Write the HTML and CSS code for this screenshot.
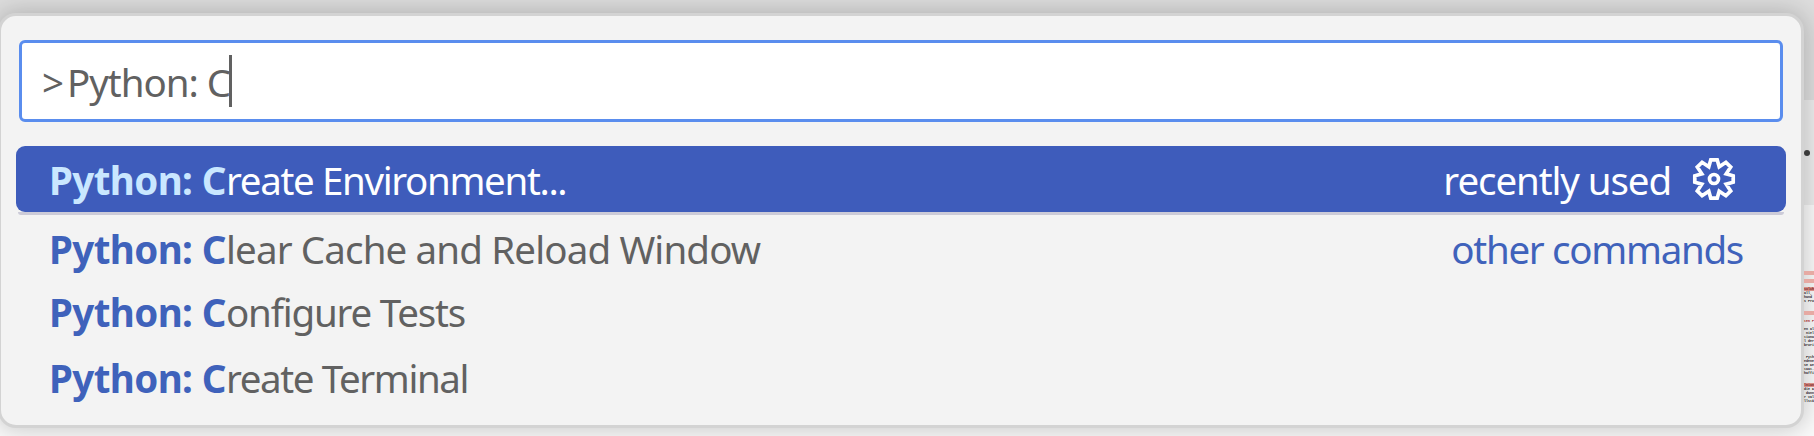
FILE: index.html
```
<!DOCTYPE html>
<html lang="en">
<head>
<meta charset="utf-8">
<title>Command Palette</title>
<link rel="stylesheet" href="styles.css">
</head>
<body>
<div class="workbench">
  <div class="titlebar"></div>
  <div class="tabs"><span class="more"></span></div>
  <div class="editor">
    <div class="minimap">
      <div class="band"></div><div></div><div class="band"></div><div></div>
      <div class="hit">sulch</div><div>all, </div><div>hand </div><div>s Pro</div><div></div><div></div>
      <div class="band"></div><div></div><div class="changed">ten P</div><div></div>
      <div>en al</div><div> niel</div><div>tiona</div><div>l der</div><div>brori</div><div></div><div></div>
      <div> Pyth</div><div>edene</div><div>se Ke</div><div>taat.</div><div>haffi</div><div></div><div></div>
      <div class="hit">lnian</div><div>die K</div><div> dann</div><div>r val</div><div>llstä</div>
    </div>
  </div>
</div>
<div class="palette">
  <div class="input"><span class="prompt">&gt;</span><span class="query">Python: C</span><span class="caret"></span></div>
  <div class="list">
    <div class="row selected">
      <b>Python: C</b><span class="label l1">reate Environment...</span>
      <span class="meta recent">recently used</span>
      <svg class="gear" viewBox="-22 -22 44 44"><path d="M-3.2-19.2H3.2L5.2-12.2 11.9-16.7 16.7-11.9 12.2-5.2 19.2-3.2V3.2L12.2 5.2 16.7 11.9 11.9 16.7 5.2 12.2 3.2 19.2H-3.2L-5.2 12.2-11.9 16.7-16.7 11.9-12.2 5.2-19.2 3.2V-3.2L-12.2-5.2-16.7-11.9-11.9-16.7-5.2-12.2Z"/><circle r="4.5"/></svg>
    </div>
    <div class="separator"></div>
    <div class="row short"><b>Python: C</b><span class="label l2">lear Cache and Reload Window</span><span class="meta other">other commands</span></div>
    <div class="row"><b>Python: C</b><span class="label l3">onfigure Tests</span></div>
    <div class="row"><b>Python: C</b><span class="label l4">reate Terminal</span></div>
  </div>
</div>
</body>
</html>
```
FILE: styles.css
```
* { box-sizing: border-box; }
body { margin: 0; height: 436px; overflow: hidden; font-family: "Noto Sans", "Open Sans", sans-serif; font-size: 38.5px; color: #616161; }
.workbench { height: 436px; display: flex; flex-direction: column; background: #f3f3f3; }
.titlebar { flex: 0 0 100px; background: #dddddd; }
.tabs { flex: 0 0 105px; background: #ececec; display: flex; justify-content: flex-end; align-items: center; padding-right: 4px; }
.more { width: 6px; height: 6px; border-radius: 50%; background: #3b3b3b; position: relative; z-index: 2; }
.editor { flex: 1; min-height: 0; background: #fafafa; display: flex; justify-content: flex-end; padding-top: 66px; }
.minimap { width: 10px; font: bold 3.3px/4px "Liberation Mono", monospace; color: #222; position: relative; z-index: 2; }
.minimap div { height: 4px; white-space: pre; }
.minimap .band { background: #e6aaa3; }
.minimap .hit { background: #d88f88; color: #701c18; }
.minimap .changed { color: #a01d18; }

.palette { position: absolute; left: -2px; top: 13px; width: 1806px; height: 415px; padding: 24px 15px 0; background: #f3f3f3; border: 3px solid #d3d3d3; border-radius: 18px; box-shadow: 0 0 24px 2px rgba(0,0,0,.2); }
.input { display: flex; align-items: center; height: 82px; width: 1764px; margin-left: 3px; padding-left: 20px; background: #fff; border: 3px solid #5a8dee; border-radius: 6px; white-space: pre; }
.prompt { width: 25px; padding-top: 2px; }
.query { width: 165px; padding-top: 2px; letter-spacing: -1.05px; }
.caret { width: 3px; height: 52px; background: #616161; margin-left: -3px; }
.list { margin-top: 24px; }
.row { display: flex; align-items: center; width: 1770px; height: 66px; padding: 2px 0 0 33px; white-space: pre; border-radius: 9px; }
.row.short { height: 63px; padding-top: 4px; }
.row b { width: 177px; color: #3f62bb; font-weight: 700; letter-spacing: -.6px; }
.selected { background: #3e5cbb; color: #fff; }
.selected b { color: #c9e7ff; }
.separator { height: 3px; width: 1766px; margin-left: 2px; background: #cccbd8; border-radius: 0 0 3px 3px; }
.l1 { letter-spacing: -1.35px; }
.l2 { letter-spacing: -.86px; }
.l3 { letter-spacing: -1.2px; }
.l4 { letter-spacing: -1.4px; }
.meta { margin-left: auto; }
.recent { margin-right: 21px; letter-spacing: -1.1px; }
.other { margin-right: 43px; color: #3f62bb; letter-spacing: -1.3px; }
.gear { width: 44px; height: 44px; margin-right: 50px; margin-top: -2px; fill: none; stroke: #fff; stroke-width: 3.7; }
```
